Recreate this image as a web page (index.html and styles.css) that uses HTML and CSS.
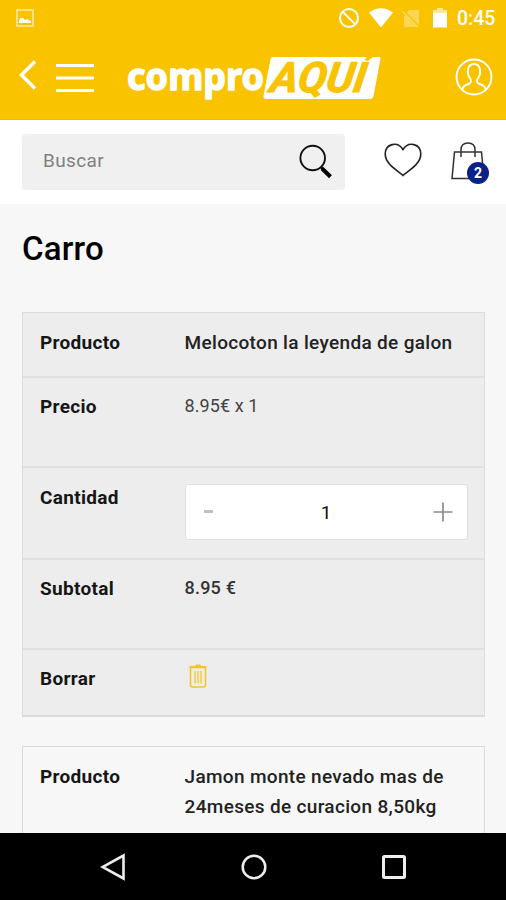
FILE: index.html
```html
<!DOCTYPE html>
<html lang="es">
<head>
<meta charset="utf-8">
<meta name="viewport" content="width=device-width, initial-scale=1">
<title>Carro</title>
<link rel="stylesheet" href="styles.css">
</head>
<body>
<div class="screen">
  <header class="top">
    <div class="status">
      <svg class="picture" width="18" height="18" viewBox="0 0 18 18"><path d="M1 1h16v16H1z" fill="none" stroke="#fff" stroke-opacity=".65" stroke-width="1.6"/><path d="M3 14V11l2-2 2 0 2 2 2-1 4 2v2z" fill="#fff"/></svg>
      <div class="signals">
        <svg width="22" height="22" viewBox="0 0 22 22"><g fill="none" stroke="#fff" stroke-width="2"><circle cx="11" cy="11" r="9"/><path d="M4.6 4.6l12.8 12.8"/></g></svg>
        <svg width="24" height="20" viewBox="0 0 24 20"><path d="M0 4.5Q12-4 24 4.5L12 19.5z" fill="#fff"/></svg>
        <svg width="18" height="19" viewBox="0 0 18 19"><path d="M7 1h10v17H2V7z" fill="#fff" opacity=".32"/><path d="M0 1l17.500 17.500" stroke="#f9c300" stroke-width="2.500"/><path d="M0 2l16 16" stroke="#fff" stroke-opacity=".4" stroke-width="1.300"/></svg>
        <svg width="14" height="20" viewBox="0 0 14 20"><path d="M4 0h6v2h4v4H0V2h4z" fill="#fff" opacity=".6"/><path d="M0 5h14v14.500H0z" fill="#fff"/></svg>
        <span class="clock">0:45</span>
      </div>
    </div>
    <nav class="brandbar">
      <svg class="back" width="18" height="30" viewBox="0 0 18 30"><path d="M16 1.500L2.500 15 16 28.500" fill="none" stroke="#fff" stroke-width="3.500"/></svg>
      <svg class="burger" width="38" height="30" viewBox="0 0 38 30"><path d="M0 2.500h38M0 15h38M0 27.500h38" stroke="#fff" stroke-width="3"/></svg>
      <svg class="logo" width="256" height="60" viewBox="0 -7 256 60">
        <text class="logo-a" x="0" y="34" textLength="137" lengthAdjust="spacingAndGlyphs">compro</text>
        <path d="M146 1h94l-2.500 3 3.500 1 5-4h6q2 0 1.500 2l-7 37q-.5 3-4 3H139q-3 0-2.500-3l7-37q.5-2 2.500-2z" fill="#fff"/>
        <g transform="translate(142 36) skewX(-9)"><text class="logo-b" x="0" y="0" textLength="95" lengthAdjust="spacingAndGlyphs">AQUI</text></g>
      </svg>
      <svg class="user" width="38" height="38" viewBox="0 0 38 38"><g fill="none" stroke="#fff" stroke-width="1.900"><circle cx="19" cy="19" r="17.500"/><path d="M7 32q1-4 5-5.500 4-1 4-3.500 0-1.500-1.500-3.500C12 16 11.500 6 19 6s7 10 4.500 13.500Q22 21.500 22 23q0 2.500 4 3.500 4 1.500 5 5.500"/></g></svg>
    </nav>
  </header>
  <section class="tools">
    <div class="search"><span>Buscar</span>
      <svg width="34" height="36" viewBox="0 0 34 36"><circle cx="13.700" cy="14" r="12.300" fill="none" stroke="#111" stroke-width="1.900"/><path d="M22 23l3 3" stroke="#111" stroke-width="2.500"/><path d="M23 24.500l8.500 8.300" stroke="#000" stroke-width="4"/></svg>
    </div>
    <svg class="heart" width="38" height="34" viewBox="0 0 38 34"><path d="M19 32.500C15 28.500 1.200 21.500 1.200 11 1.200 1 13.500-2.500 19 6.500 24.500-2.500 36.800 1 36.800 11 36.800 21.500 23 28.500 19 32.500z" fill="none" stroke="#222" stroke-width="1.600"/></svg>
    <div class="bag">
      <svg width="34" height="38" viewBox="0 0 34 38"><g fill="none" stroke="#333" stroke-width="1.500"><path d="M3.500 10h27L33 36.500H1z"/><path d="M10 15V8q0-7 7-7t7 7v7"/></g></svg>
      <span class="badge">2</span>
    </div>
  </section>
  <main class="content">
    <h1>Carro</h1>
    <dl class="card shaded">
      <div class="row r-name"><dt>Producto</dt><dd class="name">Melocoton la leyenda de galon</dd></div>
      <div class="row r-price"><dt>Precio</dt><dd class="price">8.95€ x 1</dd></div>
      <div class="row r-qty"><dt>Cantidad</dt><dd class="stepper"><i class="minus"></i><span>1</span><svg width="20" height="20" viewBox="0 0 20 20"><path d="M10 .5v19M.5 10h19" stroke="#8b8b8b" stroke-width="1.700"/></svg></dd></div>
      <div class="row r-sub"><dt>Subtotal</dt><dd class="total">8.95 €</dd></div>
      <div class="row r-del"><dt>Borrar</dt><dd class="trash"><svg width="18" height="24" viewBox="0 0 18 24"><g fill="none" stroke="#f5c529"><path d="M1.500 3.500h15v17.500q0 2-2 2h-11q-2 0-2-2z" stroke-width="1.600"/><path d="M.5 2.800h17" stroke-width="1.800"/><path d="M6 7v12.500M9 7v12.500M12 7v12.500" stroke-width="1.300"/></g><path d="M5 3l2-2.500h4L13 3z" fill="#f5c529"/></svg></dd></div>
    </dl>
    <dl class="card">
      <div class="row"><dt>Producto</dt><dd class="name second">Jamon monte nevado mas de 24meses de curacion 8,50kg</dd></div>
    </dl>
  </main>
  <footer class="keys">
    <svg width="26" height="28" viewBox="0 0 26 28"><path d="M23.500 2.500v23L2.500 14z" fill="none" stroke="#eee" stroke-width="2.600"/></svg>
    <svg width="26" height="26" viewBox="0 0 26 26"><circle cx="13" cy="13" r="11.300" fill="none" stroke="#eee" stroke-width="2.500"/></svg>
    <svg width="24" height="24" viewBox="0 0 24 24"><rect x="1.500" y="1.500" width="21" height="21" rx="1" fill="none" stroke="#eee" stroke-width="3"/></svg>
  </footer>
</div>
</body>
</html>
```
FILE: styles.css
```css
* { box-sizing: border-box; }
body { margin: 0; font-family: Roboto, "Liberation Sans", sans-serif; color: #111; }
svg { display: block; flex: none; }
.screen { width: 506px; height: 900px; display: flex; flex-direction: column; overflow: hidden; background: #f7f7f7; }
.top { height: 120px; flex: none; background: #f9c300; border-bottom: 1px solid #f7b900; }
.status { height: 36px; display: flex; justify-content: space-between; padding: 0 11px 0 16px; align-items: center; }
.signals { display: flex; align-items: center; }
.signals svg:nth-child(1) { margin-right: 9px; }
.signals svg:nth-child(2) { margin-right: 9px; }
.signals svg:nth-child(3) { margin-right: 13px; }
.signals svg:nth-child(4) { margin-right: 10px; }
.clock { width: 38px; font-size: 19.5px; font-weight: 500; color: #fff; line-height: 36px; padding-top: 2px; white-space: nowrap; }
.brandbar { display: flex; align-items: flex-start; padding: 20px 13px 0 19px; }
.back { margin-top: 4px; }
.burger { margin: 7px 33px 0 19px; }
.logo { margin-top: -7px; overflow: visible; }
.user { margin: 2px 0 0 auto; }
.logo-a { font-family: "Noto Sans", "Open Sans", sans-serif; font-weight: 700; font-size: 38px; fill: #fff; stroke: #fff; stroke-width: 1.4; stroke-linejoin: round; }
.logo-b { font-family: Roboto, sans-serif; font-style: italic; font-weight: 700; font-size: 42px; fill: #f9c300; stroke: #f9c300; stroke-width: 1; }
.tools { height: 84px; flex: none; background: #fff; display: flex; padding: 14px 16px 0 22px; }
.search { width: 323px; height: 56px; flex: none; background: #f0f0f0; border-radius: 4px; display: flex; justify-content: space-between; padding: 10px 12px 0 21px; font-size: 19px; letter-spacing: .35px; line-height: 34px; color: #808080; }
.heart { margin: 9px 0 0 39px; }
.bag { position: relative; margin: 8px 0 0 29px; }
.badge { position: absolute; left: 16px; top: 20px; width: 22px; height: 22px; border-radius: 50%; background: #0a2188; color: #fff; font-weight: 700; font-size: 14px; line-height: 22px; text-align: center; }
.content { flex: 1; min-height: 0; overflow: hidden; padding: 25px 21px 0 22px; }
h1 { margin: 0 0 43px; font-size: 33px; font-weight: 500; line-height: 40px; letter-spacing: .2px; color: #000; }
.card { margin: 0 0 29px; border: 1px solid #dadada; }
.shaded { background: #ededed; border-bottom-width: 2px; border-color: #dcdcdc; margin-bottom: 29px; }
.row { display: flex; padding: 15px 17px; line-height: 30px; font-size: 19px; }
.row + .row { border-top: 2px solid #e0e0e0; }
dt { width: 144.500px; flex: none; font-weight: 700; letter-spacing: .3px; color: #161616; }
dd { margin: 0; }
.name { font-weight: 500; letter-spacing: .33px; white-space: nowrap; color: #222; }
.second { white-space: normal; width: 276px; }
.r-name { height: 63px; }
.r-price { height: 90px; padding-top: 14px; }
.r-qty { height: 92px; }
.r-sub { height: 90px; padding-top: 14px; }
.r-del { height: 67px; padding-top: 14px; }
.price { color: #444; font-size: 18px; letter-spacing: .1px; line-height: 28px; }
.total { color: #333; font-size: 18px; letter-spacing: .2px; line-height: 28px; font-weight: 500; }
.stepper { width: 283px; height: 56px; margin-top: 1px; background: #fff; border: 1px solid #dedede; border-radius: 3px; display: flex; align-items: center; justify-content: space-between; padding: 0 14px 1px 18px; flex: none; color: #111; }
.minus { width: 9px; height: 3px; background: #c0c0c0; }
.stepper span { padding: 2px 0 0 7px; }
.trash { padding: 0 0 0 4px; }
.keys { height: 67px; flex: none; background: #000; display: flex; align-items: center; justify-content: space-between; padding: 0 100px 0 100px; }
```
